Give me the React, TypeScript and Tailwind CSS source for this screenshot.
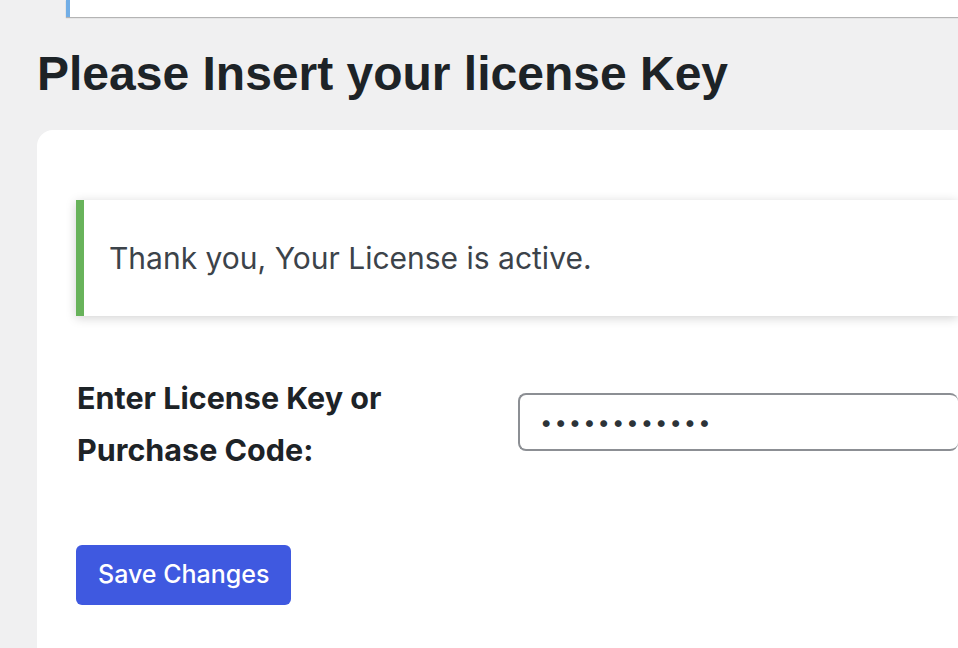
export default function App() {
  return (
    <div className="h-[648px] w-[958px] overflow-hidden bg-[#f0f0f1] pl-[37px] font-['Inter',sans-serif]">
      {/* previous admin notice, cut off at the top */}
      <div className="ml-[29px] h-[17px] border-l-4 border-[#72aee6] bg-white shadow-[0_1px_1px_rgba(0,0,0,0.25)]" />

      <h1 className="mt-[28px] font-['Liberation_Sans',sans-serif] text-[48px] font-bold leading-[58px] text-[#1d2327]">
        Please Insert your license Key
      </h1>

      <div className="mt-[27px] h-[600px] rounded-tl-2xl bg-white pl-[39px] pt-[70px]">
        {/* success notice */}
        <div className="flex h-[116px] items-center border-l-[8px] border-[#68b35b] bg-white pl-[25px] shadow-[0_2px_10px_rgba(0,0,0,0.18)]">
          <p className="text-[30px] text-[#3c434a]">Thank you, Your License is active.</p>
        </div>

        {/* form row */}
        <div className="mt-[56px] flex items-start">
          <label className="w-[442px] shrink-0 pl-px text-[30.5px] font-bold leading-[52px] text-[#1d2327]">
            Enter License Key or
            <br />
            Purchase Code:
          </label>
          <input
            type="password"
            defaultValue="mysecretkeyx"
            className="mt-[21px] h-[58px] flex-1 rounded-lg border-2 border-r-0 border-[#8c8f94] px-5 text-[22px] tracking-[2px] text-[#2c3338] outline-none"
          />
        </div>

        <button className="mt-[69px] h-[60px] rounded-md bg-[#3f59e0] px-[22px] text-[25px] font-medium text-white">
          Save Changes
        </button>
      </div>
    </div>
  );
}
